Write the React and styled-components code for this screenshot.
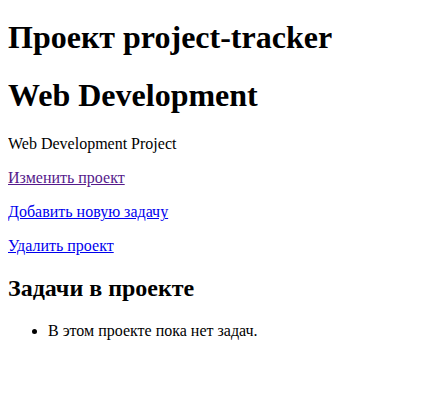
import React from "react";
import styled, { createGlobalStyle } from "styled-components";

const GlobalStyle = createGlobalStyle`
  body {
    margin: 8px;
    background: #ffffff;
    color: #000000;
    font-family: "Liberation Serif", "Times New Roman", serif;
    font-size: 16px;
  }
`

const Page = styled.div`
  display: block;
`

const Title = styled.h1`
  font-size: 32px;
  font-weight: bold;
  margin: 21.44px 0;

  &:first-child {
    margin-top: 10.5px;
  }
`

const Description = styled.p`
  margin: 16px 0;
`

const ActionRow = styled.p`
  margin: 16px 0;
`

const ActionLink = styled.a`
  color: ${props => (props.$visited ? "#551a8b" : "#0000ee")};
  text-decoration: underline;
  cursor: pointer;
`

const SectionTitle = styled.h2`
  font-size: 24px;
  font-weight: bold;
  margin: 19.92px 0;
`

const TaskList = styled.ul`
  margin: 16px 0;
  padding-left: 40px;
  list-style: disc;
`

const TaskItem = styled.li`
  margin: 0;
`

const actions = [
  { label: "Изменить проект", visited: true },
  { label: "Добавить новую задачу", visited: false },
  { label: "Удалить проект", visited: false },
]

export default function App() {
  return (
    <>
      <GlobalStyle />
      <Page>
        <Title>Проект project-tracker</Title>
        <Title>Web Development</Title>
        <Description>Web Development Project</Description>
        {actions.map(action => (
          <ActionRow key={action.label}>
            <ActionLink href="#" $visited={action.visited}>{action.label}</ActionLink>
          </ActionRow>
        ))}
        <SectionTitle>Задачи в проекте</SectionTitle>
        <TaskList>
          <TaskItem>В этом проекте пока нет задач.</TaskItem>
        </TaskList>
      </Page>
    </>
  )
}
